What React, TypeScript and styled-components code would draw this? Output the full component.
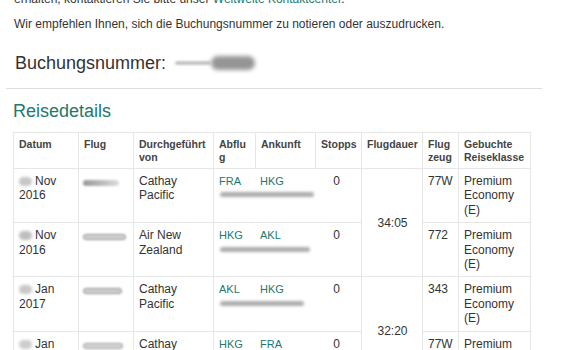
import React from 'react';
import styled, { createGlobalStyle } from 'styled-components';

const GlobalStyle = createGlobalStyle`
  html, body {
    margin: 0;
    background: #fff;
  }
  body {
    font-family: "Liberation Sans", Arial, Helvetica, sans-serif;
    color: #333;
    overflow: hidden;
  }
`;

const teal = '#22786e';

const Page = styled.div`
  width: 536px;
  margin: -8px 0 0 6px;
`;

const Text = styled.p`
  margin: 0 0 10px;
  padding-left: 8px;
  font-size: 12px;
  line-height: 15px;
`;

const Link = styled.a`
  color: ${teal};
  text-decoration: none;
`;

const BookingLine = styled.div`
  display: flex;
  align-items: center;
  gap: 9px;
  margin-top: 20px;
  padding-left: 9px;
  font-size: 18px;
  line-height: 22px;
  color: #333;
`;

const Smudge = styled.span`
  display: flex;
  align-items: center;
  width: 80px;
  height: 16px;
`;

const Blur = styled.span<{ $w: number; $h: number; $shade: string; $edge?: string; $soft?: number }>`
  display: inline-block;
  flex: none;
  width: ${(p) => p.$w}px;
  height: ${(p) => p.$h}px;
  border-radius: ${(p) => p.$h / 2}px;
  background: ${(p) => p.$shade};
  border: ${(p) => (p.$edge ? `1px solid ${p.$edge}` : '0')};
  box-sizing: border-box;
  filter: blur(${(p) => p.$soft ?? 1}px);
`;

const DayBlur = styled(Blur)`
  vertical-align: -1px;
  margin-right: 3px;
`;

const FlightBlur = styled(Blur)`
  display: block;
  margin: 6px 0 0 -1px;
`;

const Rule = styled.hr`
  border: 0;
  border-top: 1px solid #dedede;
  margin: 14px 0 11px;
`;

const Heading = styled.h2`
  margin: 0 0 10px;
  padding-left: 7px;
  font-size: 18px;
  line-height: 22px;
  font-weight: normal;
  color: ${teal};
`;

const Table = styled.table`
  margin-left: 7px;
  width: 517px;
  table-layout: fixed;
  border-collapse: collapse;
  border: 1px solid #dcdcdc;
`;

const Th = styled.th`
  padding: 5px 1px 4px 5px;
  font-size: 10.5px;
  line-height: 13px;
  font-weight: bold;
  color: #444;
  text-align: left;
  vertical-align: top;
  border: 1px solid #e6e6e6;
`;

const Td = styled.td<{ $center?: boolean; $middle?: boolean }>`
  padding: 5px 4px 5px 5px;
  font-size: 12px;
  line-height: 14.4px;
  color: #333;
  text-align: ${(p) => (p.$center ? 'center' : 'left')};
  vertical-align: ${(p) => (p.$middle ? 'middle' : 'top')};
  border: 1px solid #e6e6e6;
`;

const Route = styled.div`
  display: grid;
  grid-template-columns: 41px 56px 1fr;
  align-items: start;
`;

const Code = styled.span`
  font-size: 11px;
  line-height: 14.4px;
  color: ${teal};
`;

const Stops = styled.span`
  text-align: center;
`;

const TimeBlur = styled(Blur)`
  grid-column: 1 / 4;
  margin: 4px 0 0 1px;
`;

type Leg = {
  day: string;
  dayShade: string;
  flightW: number;
  flightShade: string;
  flightEdge?: string;
  carrier: string;
  from: string;
  to: string;
  timeW: number;
  duration?: string;
  plane: string;
};

const legs: Leg[] = [
  { day: 'Nov 2016', dayShade: '#c6c6c6', flightW: 36, flightShade: 'linear-gradient(90deg,#999,#bdbdbd 55%,#dedede)', carrier: 'Cathay Pacific', from: 'FRA', to: 'HKG', timeW: 94, duration: '34:05', plane: '77W' },
  { day: 'Nov 2016', dayShade: '#bebebe', flightW: 43, flightShade: '#d2d2d2', flightEdge: '#8e8e8e', carrier: 'Air New Zealand', from: 'HKG', to: 'AKL', timeW: 90, plane: '772' },
  { day: 'Jan 2017', dayShade: '#c8c8c8', flightW: 39, flightShade: '#d0d0d0', flightEdge: '#8c8c8c', carrier: 'Cathay Pacific', from: 'AKL', to: 'HKG', timeW: 84, duration: '32:20', plane: '343' },
  { day: 'Jan 2017', dayShade: '#cdcdcd', flightW: 40, flightShade: '#d4d4d4', flightEdge: '#999', carrier: 'Cathay Pacific', from: 'HKG', to: 'FRA', timeW: 86, plane: '77W' },
];

const App = () => {
  return (
    <>
      <GlobalStyle />
      <Page>
        <Text>
          erhalten, kontaktieren Sie bitte unser <Link href="#">Weltweite Kontaktcenter</Link>.
        </Text>
        <Text>Wir empfehlen Ihnen, sich die Buchungsnummer zu notieren oder auszudrucken.</Text>
        <BookingLine>
          Buchungsnummer:
          <Smudge>
            <Blur $w={36} $h={4} $shade="#c4c4c4" $soft={0.8} />
            <Blur $w={44} $h={14} $shade="#959595" $soft={2} />
          </Smudge>
        </BookingLine>
        <Rule />
        <Heading>Reisedetails</Heading>
        <Table>
          <colgroup>
            <col style={{ width: 65 }} />
            <col style={{ width: 55 }} />
            <col style={{ width: 80 }} />
            <col style={{ width: 42 }} />
            <col style={{ width: 60 }} />
            <col style={{ width: 46 }} />
            <col style={{ width: 61 }} />
            <col style={{ width: 36 }} />
            <col style={{ width: 72 }} />
          </colgroup>
          <thead>
            <tr>
              <Th>Datum</Th>
              <Th>Flug</Th>
              <Th>Durchgeführt von</Th>
              <Th>
                Abflu
                <br />g
              </Th>
              <Th>Ankunft</Th>
              <Th>Stopps</Th>
              <Th>Flugdauer</Th>
              <Th>
                Flug<wbr />zeug
              </Th>
              <Th>Gebuchte Reiseklasse</Th>
            </tr>
          </thead>
          <tbody>
            {legs.map((leg, i) => (
              <tr key={i}>
                <Td>
                  <DayBlur $w={13} $h={9} $shade={leg.dayShade} $soft={1.5} />
                  {leg.day}
                </Td>
                <Td>
                  <FlightBlur $w={leg.flightW} $h={6} $shade={leg.flightShade} $edge={leg.flightEdge} $soft={0.8} />
                </Td>
                <Td>{leg.carrier}</Td>
                <Td colSpan={3}>
                  <Route>
                    <Code>{leg.from}</Code>
                    <Code>{leg.to}</Code>
                    <Stops>0</Stops>
                    <TimeBlur $w={leg.timeW} $h={5} $shade="#adadad" $soft={1.4} />
                  </Route>
                </Td>
                {leg.duration && (
                  <Td rowSpan={2} $center $middle>
                    {leg.duration}
                  </Td>
                )}
                <Td>{leg.plane}</Td>
                <Td>Premium Economy (E)</Td>
              </tr>
            ))}
          </tbody>
        </Table>
      </Page>
    </>
  );
};

export default App;
